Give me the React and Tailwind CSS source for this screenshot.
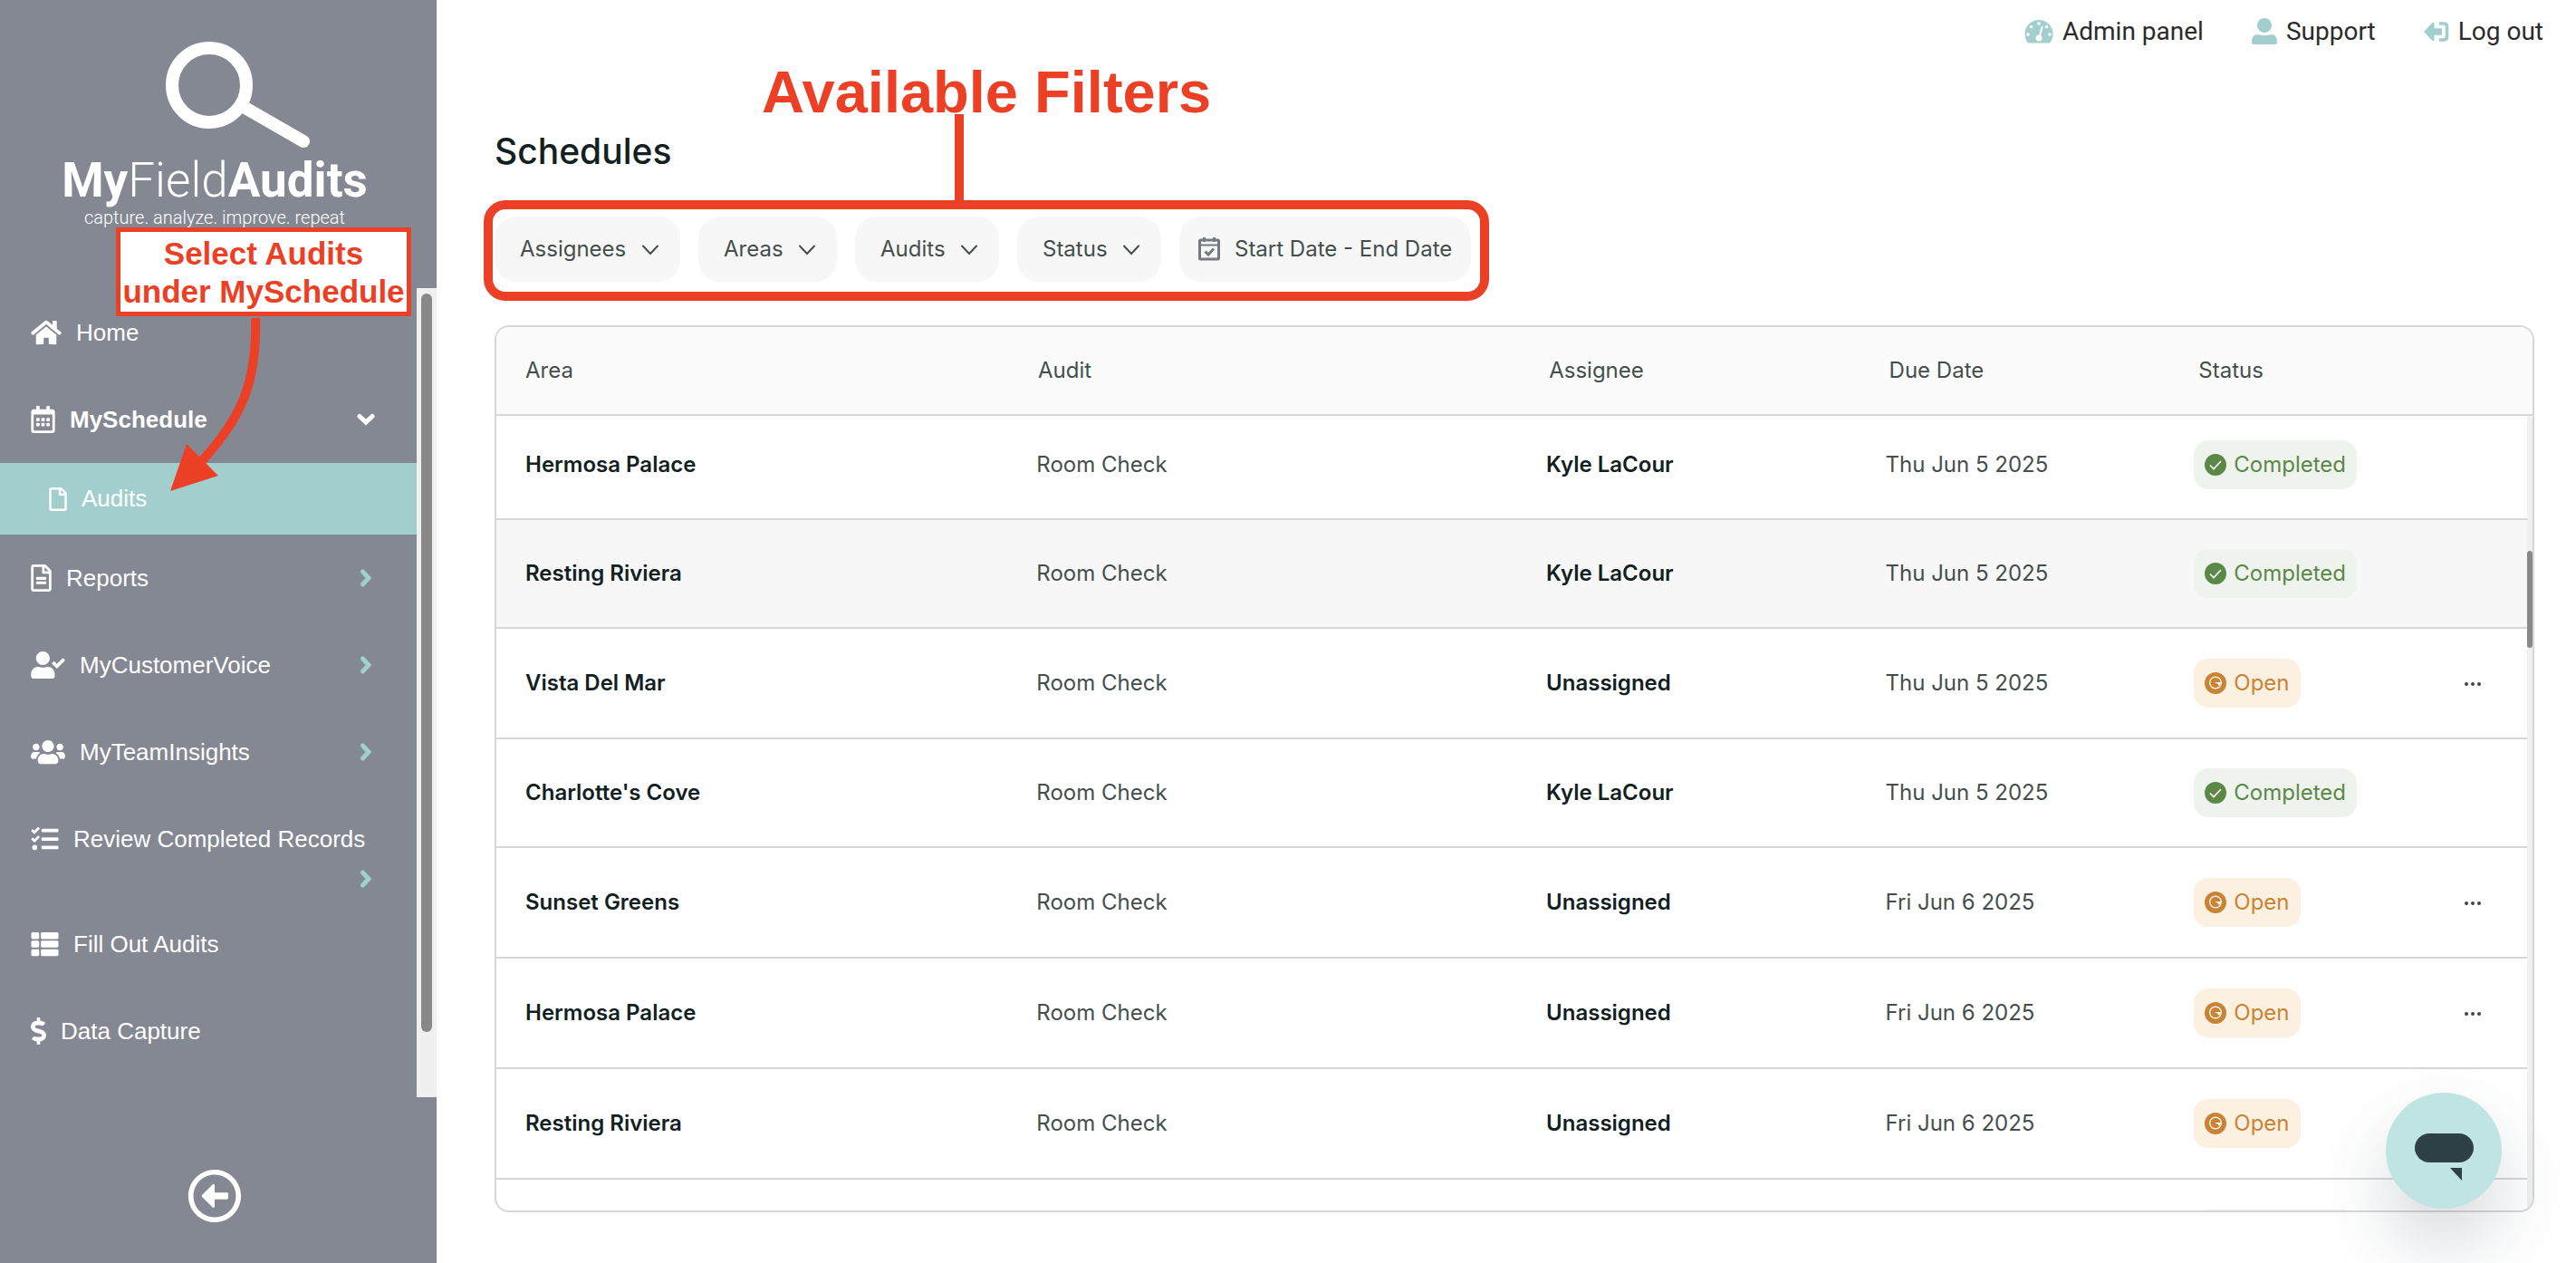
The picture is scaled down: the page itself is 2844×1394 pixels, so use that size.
import React, { useState } from "react";
import {
  FaHome,
  FaRegCalendarAlt,
  FaRegFile,
  FaRegFileAlt,
  FaUserCheck,
  FaUsers,
  FaTasks,
  FaThList,
  FaDollarSign,
  FaRegArrowAltCircleLeft,
} from "react-icons/fa";

const filters = ["Assignees", "Areas", "Audits", "Status"];

const columns = ["Area", "Audit", "Assignee", "Due Date", "Status"];

const schedules = [
  { area: "Hermosa Palace", assignee: "Kyle LaCour", due: "Thu Jun 5 2025", status: "Completed" },
  { area: "Resting Riviera", assignee: "Kyle LaCour", due: "Thu Jun 5 2025", status: "Completed", active: true },
  { area: "Vista Del Mar", assignee: "Unassigned", due: "Thu Jun 5 2025", status: "Open" },
  { area: "Charlotte's Cove", assignee: "Kyle LaCour", due: "Thu Jun 5 2025", status: "Completed" },
  { area: "Sunset Greens", assignee: "Unassigned", due: "Fri Jun 6 2025", status: "Open" },
  { area: "Hermosa Palace", assignee: "Unassigned", due: "Fri Jun 6 2025", status: "Open" },
  { area: "Resting Riviera", assignee: "Unassigned", due: "Fri Jun 6 2025", status: "Open" },
];

function Logo() {
  return (
    <div className="flex h-[318px] shrink-0 flex-col items-center pt-[46px] pr-2 text-white">
      <svg viewBox="0 0 160 118" className="ml-[52px] h-[118px] w-[160px]" fill="none" stroke="currentColor" strokeWidth="14">
        <circle cx="48" cy="48" r="41" />
        <path d="M86 72 L152 110" strokeLinecap="round" />
      </svg>
      <div className="mt-[5px] font-['Roboto'] text-[53px] leading-[60px]">
        <span className="font-bold">My</span>
        <span className="font-light">Field</span>
        <span className="font-bold">Audits</span>
      </div>
      <div className="font-['Roboto'] text-[20px] leading-[22px] font-light">
        capture. analyze. improve. repeat
      </div>
    </div>
  );
}

function Chevron({ down }) {
  return (
    <svg
      viewBox="0 0 20 20"
      className={`ml-auto size-5 shrink-0 ${down ? "" : "text-[#a2cfce]"}`}
      fill="none"
      stroke="currentColor"
      strokeWidth="5"
      strokeLinecap="round"
    >
      <path d={down ? "M3 6.500 L10 13 L17 6.500" : "M6.500 3 L13 10 L6.500 17"} />
    </svg>
  );
}

function NavItem({ icon: Icon, size, label, arrow, bold }) {
  return (
    <a href="#" className="flex items-center py-[26px] pr-[46px] pl-[34px] leading-11">
      <Icon className={`mr-4 h-[30px] shrink-0 ${size}`} />
      <span className={bold ? "font-bold" : ""}>{label}</span>
      {arrow && <Chevron down={arrow === "down"} />}
    </a>
  );
}

function Sidebar() {
  return (
    <aside className="flex w-[482px] shrink-0 flex-col bg-[#848893]">
      <Logo />
      <div className="flex h-[893px] shrink-0">
        <nav className="flex-1 pt-px font-['Liberation_Sans'] text-[26px] text-white">
          <NavItem icon={FaHome} size="w-[34px]" label="Home" />
          <NavItem icon={FaRegCalendarAlt} size="w-[27px]" label="MySchedule" arrow="down" bold />
          <a href="#" className="flex h-[79px] items-center bg-[#a2cfce] pl-[54px]">
            <FaRegFile className="mr-4 h-[26px] w-5" />
            Audits
          </a>
          <NavItem icon={FaRegFileAlt} size="w-[23px]" label="Reports" arrow="right" />
          <NavItem icon={FaUserCheck} size="w-[38px]" label="MyCustomerVoice" arrow="right" />
          <NavItem icon={FaUsers} size="w-[38px]" label="MyTeamInsights" arrow="right" />
          {/* label is too long for the arrow, so the arrow drops below it */}
          <a href="#" className="block py-[26px] pr-[46px] pl-[34px] leading-11">
            <span className="flex items-center">
              <FaTasks className="mr-4 h-[30px] w-[31px] shrink-0" />
              <span className="whitespace-nowrap">Review Completed Records</span>
            </span>
            <span className="-mb-6 flex h-11 items-center">
              <Chevron />
            </span>
          </a>
          <NavItem icon={FaThList} size="w-[31px]" label="Fill Out Audits" />
          <NavItem icon={FaDollarSign} size="w-[17px]" label="Data Capture" />
        </nav>
        <div className="flex w-[22px] justify-center bg-[#f0f0f1] py-1.5">
          <div className="h-[815px] w-3 rounded-full bg-[#888888]" />
        </div>
      </div>
      <div className="flex flex-1 items-center justify-center pt-[34px] pr-2">
        <button aria-label="Collapse menu" className="text-white">
          <FaRegArrowAltCircleLeft className="size-[60px]" />
        </button>
      </div>
    </aside>
  );
}

function TopLinks() {
  return (
    <div className="flex h-[70px] shrink-0 items-center justify-end gap-[53px] pr-[36px] font-['Roboto'] text-[28px] text-[#2b2b2b]">
      <a href="#" className="flex items-center gap-2.5">
        <svg viewBox="0 0 32 26" className="h-[26px] w-8 fill-[#a2cfce]">
          <path d="M4 25.500 Q0.500 21 0.500 15.500 A15.500 15.500 0 0 1 31.500 15.500 Q31.500 21 28 25.500 Z" />
          <g fill="white">
            <circle cx="4" cy="16" r="1.800" />
            <circle cx="7.500" cy="7.500" r="1.800" />
            <circle cx="16" cy="4" r="1.800" />
            <circle cx="24.500" cy="7.500" r="1.800" />
            <circle cx="28" cy="16" r="1.800" />
            <circle cx="16" cy="20" r="3.500" />
          </g>
          <path d="M16.500 19 L19.500 8" stroke="white" strokeWidth="2.200" strokeLinecap="round" />
        </svg>
        Admin panel
      </a>
      <a href="#" className="flex items-center gap-2.5">
        <svg viewBox="0 0 28 30" className="h-[30px] w-7 fill-[#a2cfce]">
          <circle cx="14" cy="8" r="8" />
          <path d="M7 18 C11 19.500 17 19.500 21 18 C26 18 28 21.500 28 26 Q28 29 25.500 29 H2.500 Q0 29 0 26 C0 21.500 2 18 7 18 Z" />
        </svg>
        Support
      </a>
      <a href="#" className="flex items-center gap-2.5">
        <svg viewBox="0 0 28 22" className="h-[22px] w-7 fill-[#a2cfce]">
          <path d="M0 11 L9.500 1 Q11.500 0 11.500 2 V7.300 H20 V14.700 H11.500 V20 Q11.500 22 9.500 21 Z" />
          <path d="M17 2 H22 Q25.500 2 25.500 5.500 V16.500 Q25.500 20 22 20 H17" fill="none" stroke="#a2cfce" strokeWidth="3.600" />
        </svg>
        Log out
      </a>
    </div>
  );
}

function Filters() {
  return (
    <div className="relative flex w-fit gap-5 text-2xl text-[#444f4c]">
      {filters.map((name) => (
        <div key={name} className="relative">
          <select aria-label={name} className="h-[72px] appearance-none rounded-3xl bg-[#f7f7f7] pr-[59px] pl-7">
            <option>{name}</option>
          </select>
          <svg viewBox="0 0 18 12" className="pointer-events-none absolute top-[31px] right-6 h-3 w-[18px]" fill="none" stroke="currentColor" strokeWidth="2">
            <path d="M1 1.500 L9 10 L17 1.500" strokeLinecap="round" />
          </svg>
        </div>
      ))}
      <button className="flex h-[72px] items-center gap-4 rounded-3xl bg-[#f7f7f7] px-[21px]">
        <svg viewBox="0 0 24 26" className="h-[26px] w-6" fill="none" stroke="#727b80" strokeWidth="3">
          <rect x="1.500" y="3" width="21" height="21" rx="1" />
          <path d="M1 8.500 H23" strokeWidth="2" />
          <path d="M6.500 0 V5 M17.500 0 V5" />
          <path d="M7.500 15.500 L11 19 L17 12.500" />
        </svg>
        Start Date - End Date
      </button>

      {/* red frame around the filters */}
      <div className="pointer-events-none absolute -top-[18px] -right-5 -bottom-[21px] -left-3 rounded-3xl border-10 border-[#eb4025]" />
    </div>
  );
}

function StatusPill({ status }) {
  if (status === "Completed") {
    return (
      <span className="flex h-[54px] w-fit items-center gap-2 rounded-2xl bg-[#eef3ee] px-3 text-[#5c8847]">
        <svg viewBox="0 0 24 24" className="size-6">
          <circle cx="12" cy="12" r="12" fill="currentColor" />
          <path d="M6 12.500 L10 16.500 L18 8" fill="none" stroke="white" strokeWidth="1.600" />
        </svg>
        Completed
      </span>
    );
  }
  return (
    <span className="flex h-[54px] w-fit items-center gap-2 rounded-2xl bg-[#fcf0e0] px-3 text-[#c98335]">
      <svg viewBox="0 0 24 24" className="size-6">
        <circle cx="12" cy="12" r="12" fill="currentColor" />
        <circle cx="12" cy="11.500" r="6.300" fill="none" stroke="white" strokeWidth="1.200" />
        <path d="M11 11 H18.500 L16 15 L14.500 12.800 Z" fill="white" />
      </svg>
      Open
    </span>
  );
}

function Cols() {
  return (
    <colgroup>
      <col className="w-[26.6%]" />
      <col className="w-[25.1%]" />
      <col className="w-[16.7%]" />
      <col className="w-[15.2%]" />
      <col className="w-[9%]" />
      <col />
    </colgroup>
  );
}

function ScheduleTable() {
  return (
    <div className="flex min-h-0 flex-1 flex-col overflow-hidden rounded-2xl border-2 border-[#d7d7d7] text-2xl text-[#444f4c]">
      <table className="w-full shrink-0 table-fixed border-b-2 border-[#d7d7d7] bg-[#fbfbfb] text-left">
        <Cols />
        <thead>
          <tr className="h-[97px]">
            {columns.map((col) => (
              <th key={col} className="p-0 font-normal first:pl-8">
                {col}
              </th>
            ))}
            <th />
          </tr>
        </thead>
      </table>
      <div className="flex min-h-0 flex-1">
        <div className="min-w-0 flex-1 overflow-hidden">
          <table className="-mt-1.5 w-full table-fixed border-collapse">
            <Cols />
            <tbody>
              {schedules.map((row, index) => (
                <tr
                  key={index}
                  className={`border-b-2 border-[#d7d7d7] ${row.status === "Open" ? "h-[122px]" : "h-[120px]"} ${
                    row.active ? "bg-[#f7f7f7]" : "bg-white"
                  }`}
                >
                  <td className="pl-8 font-semibold text-[#12211f]">{row.area}</td>
                  <td>Room Check</td>
                  <td className="font-semibold text-[#12211f]">{row.assignee}</td>
                  <td>{row.due}</td>
                  <td>
                    <StatusPill status={row.status} />
                  </td>
                  <td className="pr-12 text-right">
                    {row.status === "Open" && (
                      <button aria-label="Row actions" className="align-middle">
                        <svg viewBox="0 0 24 24" className="size-6 fill-[#3c4744]">
                          <circle cx="5" cy="12" r="2" />
                          <circle cx="12" cy="12" r="2" />
                          <circle cx="19" cy="12" r="2" />
                        </svg>
                      </button>
                    )}
                  </td>
                </tr>
              ))}
              <tr className="h-[120px]">
                <td colSpan={4} />
                <td>
                  <div className="h-[54px] w-[180px] rounded-2xl bg-[#eef3ee]" />
                </td>
                <td />
              </tr>
            </tbody>
          </table>
        </div>
        <div className="w-1.5 rounded-full bg-[#f0f0f0] pt-[149px]">
          <div className="h-[107px] rounded-full bg-[#888888]" />
        </div>
      </div>
    </div>
  );
}

export default function App() {
  const [chatOpen, setChatOpen] = useState(false);

  return (
    <div className="relative flex h-screen overflow-hidden bg-white font-['Inter']">
      <Sidebar />
      <main className="flex min-w-0 flex-1 flex-col">
        <TopLinks />
        <div className="flex min-h-0 flex-1 flex-col pr-[46px] pb-14 pl-16">
          <h1 className="mt-[73px] mb-12 text-[39px] leading-[48px] font-medium text-[#12211f]">Schedules</h1>
          <Filters />
          <div className="h-12 shrink-0" />
          <ScheduleTable />
        </div>
      </main>

      {/* notes drawn over the page */}
      <div className="pointer-events-none absolute top-[251px] left-32 w-[326px] border-[5px] border-[#eb4025] bg-white pt-[3px] pb-px text-center font-['Liberation_Sans'] text-[35px] leading-[42px] font-bold whitespace-nowrap text-[#eb4025]">
        Select Audits
        <br />
        under MySchedule
      </div>
      <svg viewBox="0 0 120 200" className="pointer-events-none absolute top-[350px] left-[180px] h-[200px] w-[120px]">
        <path d="M102 1 C104 70 88 110 42 160" fill="none" stroke="#eb4025" strokeWidth="10" />
        <path d="M8 192 L26 140 L61 175 Z" fill="#eb4025" />
      </svg>
      <div className="pointer-events-none absolute top-16 left-[841px] font-['Liberation_Sans'] text-[65px] leading-[76px] font-bold text-[#eb4025]">
        Available Filters
      </div>
      <div className="pointer-events-none absolute top-[126px] left-[1054px] h-24 w-2.5 bg-[#eb4025]" />

      <button
        aria-label="Open chat"
        onClick={() => setChatOpen(!chatOpen)}
        className="absolute right-[82px] bottom-[60px] flex size-32 items-center justify-center rounded-full bg-[#c0e4e1] shadow-[0_40px_80px_rgba(45,64,80,0.2)]"
      >
        <svg viewBox="0 0 128 128" className="size-32 fill-[#2d4044]">
          <rect x="32" y="45" width="65" height="32" rx="16" />
          <path d="M71 83 H84 V97 Z" />
        </svg>
      </button>
    </div>
  );
}
